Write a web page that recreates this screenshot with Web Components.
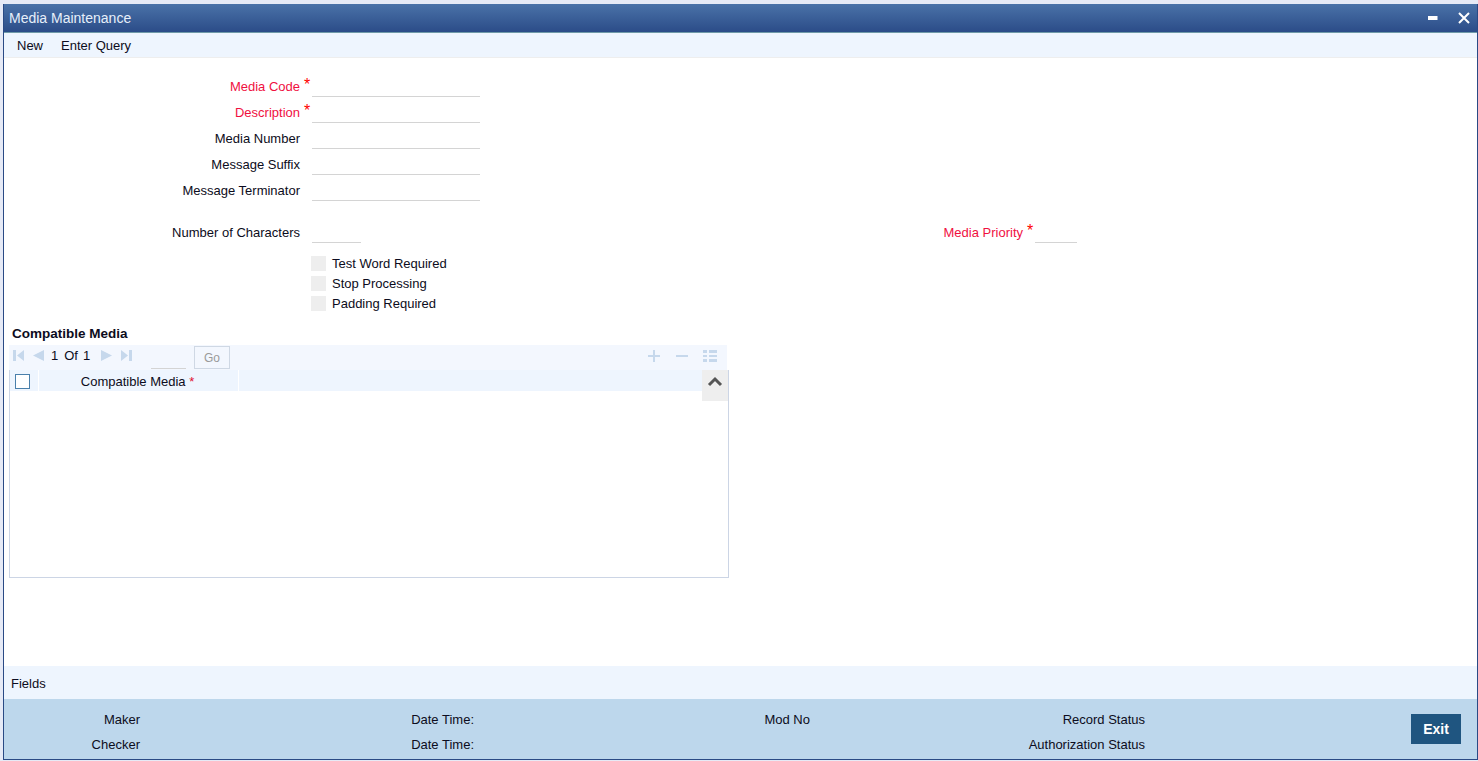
<!DOCTYPE html>
<html>
<head>
<meta charset="utf-8">
<title>Media Maintenance</title>
<style>
html, body { margin:0; height:100%; }
body { background:#e6eaf6; font:13px "Liberation Sans", Arial, sans-serif; color:#0c0c20; overflow:hidden; }
</style>
</head>
<body>

<media-window heading="Media Maintenance">
    <tool-link slot="menu">New</tool-link>
    <tool-link slot="menu">Enter Query</tool-link>

    <form-row label="Media Code" required></form-row>
    <form-row label="Description" required></form-row>
    <form-row label="Media Number"></form-row>
    <form-row label="Message Suffix"></form-row>
    <form-row label="Message Terminator"></form-row>

    <split-row>
        <form-row label="Number of Characters" width="49"></form-row>
        <form-row slot="right" label="Media Priority" required width="42" labelwidth="1019"></form-row>
    </split-row>

    <check-row label="Test Word Required"></check-row>
    <check-row label="Stop Processing"></check-row>
    <check-row label="Padding Required"></check-row>

    <media-grid heading="Compatible Media" column="Compatible Media"></media-grid>

    <tool-link slot="fields">Fields</tool-link>
    <audit-bar slot="audit"></audit-bar>
</media-window>

<script>
// outer window, title bar + menu strip + body + footer
class MediaWindow extends HTMLElement {
    constructor() {
        super();
        this.attachShadow({mode:'open'}).innerHTML = `
        <style>
        :host { display:flex; flex-direction:column; box-sizing:border-box; height:756px; margin:4px 0 0 3px;
            border:solid #2a4a85; border-width:0 1px 1px 1px; background:#fff; }
        .title { flex:none; display:flex; align-items:center; height:28px; padding:0 7px 0 5px;
            background:linear-gradient(#4a72a8,#2b4c88); color:#e6effa; font-size:14px; border-bottom:1px solid #6f9aa8; }
        .title span { flex:1; }
        .title svg { display:block; }
        .title svg + svg { margin-left:18px; }
        .menu { flex:none; display:flex; gap:18px; height:24px; align-items:center; padding:0 13px;
            background:#eef5fe; border-bottom:1px solid #eee; }
        .body { flex:1; min-height:0; padding-top:16px; }
        .fields { flex:none; display:flex; align-items:center; box-sizing:border-box; height:33px; padding:1px 7px 0; background:#eef5fe; }
        </style>
        <div class="title"><span></span>
            <svg width="12" height="12" viewBox="0 0 12 12"><rect x="0" y="4" width="9.500" height="4" fill="#fff"/></svg>
            <svg width="12" height="12" viewBox="0 0 12 12"><path d="M1 1 L11 11 M11 1 L1 11" stroke="#fff" stroke-width="2" fill="none"/></svg>
        </div>
        <div class="menu"><slot name="menu"></slot></div>
        <div class="body"><slot></slot></div>
        <div class="fields"><slot name="fields"></slot></div>
        <slot name="audit"></slot>`;
        this.shadowRoot.querySelector('.title span').textContent = this.getAttribute('heading');
    }
}

class ToolLink extends HTMLElement {
    constructor() {
        super();
        this.attachShadow({mode:'open'}).innerHTML = `
        <style>:host { display:block; color:#0c0c20; font-size:13px; }</style><slot></slot>`;
    }
}

// label on the left, underlined input on the right
class FormRow extends HTMLElement {
    constructor() {
        super();
        const w = this.getAttribute('width') || 168;
        const lw = this.getAttribute('labelwidth') || 296;
        this.attachShadow({mode:'open'}).innerHTML = `
        <style>
        :host { display:flex; height:26px; align-items:flex-start; }
        :host([required]) label { color:#f0103f; }
        label { width:${lw}px; flex:none; text-align:right; line-height:26px; }
        .star { width:12px; flex:none; color:#f00; font-size:16px; line-height:22px; padding-left:4px; box-sizing:border-box; }
        input { box-sizing:border-box; width:${w}px; height:23px; border:0; border-bottom:1px solid #d4d4d4; padding:0; margin:0; background:transparent; outline:0; }
        </style>
        <label></label><span class="star"></span><input type="text">`;
        this.shadowRoot.querySelector('label').textContent = this.getAttribute('label');
        if (this.hasAttribute('required')) this.shadowRoot.querySelector('.star').textContent = '*';
    }
}

// the row holding Number of Characters and Media Priority
class SplitRow extends HTMLElement {
    constructor() {
        super();
        this.attachShadow({mode:'open'}).innerHTML = `
        <style>
        :host { display:block; position:relative; height:26px; margin-top:16px; margin-bottom:7px; }
        .right { position:absolute; left:0; top:0; right:0; }
        </style>
        <slot></slot><div class="right"><slot name="right"></slot></div>`;
    }
}

class CheckRow extends HTMLElement {
    constructor() {
        super();
        this.attachShadow({mode:'open'}).innerHTML = `
        <style>
        :host { display:flex; align-items:center; height:20px; padding-left:307px; }
        i { width:15px; height:15px; background:#eee; flex:none; margin-right:6px; }
        </style>
        <i></i><span></span>`;
        this.shadowRoot.querySelector('span').textContent = this.getAttribute('label');
    }
}

// multi-entry block: heading, pager toolbar, table
class MediaGrid extends HTMLElement {
    constructor() {
        super();
        this.attachShadow({mode:'open'}).innerHTML = `
        <style>
        :host { display:block; margin:11px 0 0 5px; width:720px; }
        h3 { margin:0 0 0 3px; font-size:13.500px; line-height:19px; height:21px; font-weight:bold; color:#0c0c20; }
        .pager { display:flex; align-items:flex-start; height:25px; margin-right:2px; background:#f3f7fe; padding-left:4px; box-sizing:border-box; }
        .pager > svg { display:block; flex:none; margin-top:5px; }
        .count { display:flex; gap:6px; margin:0 14px 0 7px; width:38px; white-space:nowrap; line-height:21px; }
        .count span:last-child { margin-left:-1px; }
        .page { width:35px; height:24px; border-bottom:1px solid #d4d4d4; box-sizing:border-box; margin-right:8px; }
        .go { box-sizing:border-box; width:36px; height:23px; margin-top:1px; border:1px solid #cfd8e4; color:#9a9a9a; text-align:center; line-height:23px; font-size:12px; }
        .acts { margin:4px 10px 0 auto; display:flex; gap:14px; }
        .table { position:relative; height:208px; border:solid #ccd5e5; border-width:0 1px 1px 1px; box-sizing:border-box; }
        .head { display:flex; height:21px; background:#eef5fe; margin-right:26px; }
        .tick { width:29px; flex:none; display:flex; align-items:center; padding-left:5px; box-sizing:border-box; border-right:1px solid #fff; }
        .tick i { box-sizing:border-box; width:15px; height:15px; margin-top:2px; background:#fff; border:1px solid #4a80ab; display:block; }
        .col { width:200px; flex:none; text-align:center; line-height:23px; border-right:1px solid #fff; box-sizing:border-box; padding-right:2px; }
        .col b { color:#e01030; font-weight:normal; font-size:13px; }
        .up { position:absolute; top:0; right:0; width:26px; height:31px; background:#eee; display:flex; align-items:flex-start; justify-content:center; padding-top:6px; box-sizing:border-box; }
        </style>
        <h3></h3>
        <div class="pager">
            <svg width="11" height="11" viewBox="0 0 11 11" fill="#c6d8ec"><path d="M0 0h3v11H0z M11 0v11L4 5.500z"/></svg>
            <svg width="12" height="11" viewBox="0 0 12 11" fill="#c6d8ec" style="margin-left:8px"><path d="M12 0v11L1 5.500z"/></svg>
            <div class="count"><span>1</span><span>Of</span><span>1</span></div>
            <svg width="11" height="11" viewBox="0 0 11 11" fill="#c6d8ec" style="margin-left:-2px"><path d="M0 0v11L11 5.500z"/></svg>
            <svg width="11" height="11" viewBox="0 0 11 11" fill="#c6d8ec" style="margin-left:9px;margin-right:19px"><path d="M0 0v11L7 5.500z M8 0h3v11H8z"/></svg>
            <div class="page"></div>
            <div class="go">Go</div>
            <div class="acts">
                <svg width="14" height="14" viewBox="0 0 14 14" fill="#c6d8ec"><path d="M6 1h2v5h5v2H8v5H6V8H1V6h5z"/></svg>
                <svg width="14" height="14" viewBox="0 0 14 14" fill="#c6d8ec"><path d="M1 6h12v2H1z"/></svg>
                <svg width="14" height="14" viewBox="0 0 14 14" fill="#c6d8ec"><path d="M0 1h4v3H0z M6 1h8v3H6z M0 6h4v2H0z M6 6h8v2H6z M0 10h4v3H0z M6 10h8v3H6z"/></svg>
            </div>
        </div>
        <div class="table">
            <div class="head">
                <div class="tick"><i></i></div>
                <div class="col"><span></span> <b>*</b></div>
            </div>
            <div class="up"><svg width="16" height="11" viewBox="0 0 16 11"><path d="M2 9 L8 3 L14 9" fill="none" stroke="#555" stroke-width="3"/></svg></div>
        </div>`;
        this.shadowRoot.querySelector('h3').textContent = this.getAttribute('heading');
        this.shadowRoot.querySelector('.col span').textContent = this.getAttribute('column');
    }
}

// maker / checker strip with the exit button
class AuditBar extends HTMLElement {
    constructor() {
        super();
        const cols = [['Maker','Checker'],['Date Time:','Date Time:'],['Mod No',''],['Record Status','Authorization Status']];
        this.attachShadow({mode:'open'}).innerHTML = `
        <style>
        :host { display:flex; flex:none; height:60px; background:#bdd7ec; box-sizing:border-box; padding-top:8px; }
        .col { flex:none; text-align:right; line-height:25px; white-space:nowrap; }
        .col:nth-of-type(1) { width:136px; }
        .col:nth-of-type(2) { width:334px; }
        .col:nth-of-type(3) { width:336px; }
        .col:nth-of-type(4) { width:335px; }
        button { margin:7px 16px 0 auto; width:50px; height:30px; border:0; background:#1f5580; color:#fff; font:bold 14px "Liberation Sans", Arial, sans-serif; padding:0; }
        </style>
        ${cols.map(c => `<div class="col"><div>${c[0] || '&nbsp;'}</div><div>${c[1] || '&nbsp;'}</div></div>`).join('')}
        <button>Exit</button>`;
    }
}

customElements.define('media-window', MediaWindow);
customElements.define('tool-link', ToolLink);
customElements.define('form-row', FormRow);
customElements.define('split-row', SplitRow);
customElements.define('check-row', CheckRow);
customElements.define('media-grid', MediaGrid);
customElements.define('audit-bar', AuditBar);
</script>
</body>
</html>
